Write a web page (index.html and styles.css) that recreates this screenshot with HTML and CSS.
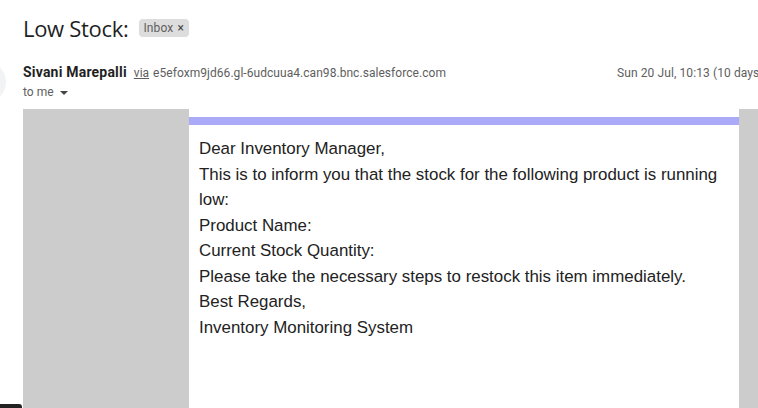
FILE: index.html
```html
<!DOCTYPE html>
<html>
<head>
<meta charset="utf-8">
<link rel="stylesheet" href="styles.css">
</head>
<body>
<div class="page">
  <div class="subject-row">
    <h1 class="subject">Low Stock:</h1>
    <span class="chip">Inbox <span class="chip-x">×</span></span>
  </div>
  <div class="sender-block">
    <div class="avatar"></div>
    <div class="sender-info">
      <div class="sender-row">
        <span class="sender-name">Sivani Marepalli</span>
        <span class="via">via</span>
        <span class="sender-addr">e5efoxm9jd66.gl-6udcuua4.can98.bnc.salesforce.com</span>
        <span class="date">Sun 20 Jul, 10:13 (10 days</span>
      </div>
      <div class="to-row">to me <svg class="caret" width="10" height="10" viewBox="0 0 10 10"><path d="M1 3h8L5 7z" fill="#444"/></svg></div>
    </div>
  </div>
  <div class="mail-frame">
    <div class="side-left"></div>
    <div class="content">
      <div class="content-inner">
        <p>Dear Inventory Manager,</p>
        <p>This is to inform you that the stock for the following product is running low:</p>
        <p>Product Name:</p>
        <p>Current Stock Quantity:</p>
        <p>Please take the necessary steps to restock this item immediately.</p>
        <p>Best Regards,</p>
        <p>Inventory Monitoring System</p>
      </div>
    </div>
    <div class="side-right"></div>
  </div>
  <div class="corner-tab"></div>
</div>
</body>
</html>
```

FILE: styles.css
```css
html, body {
  margin: 0;
  padding: 0;
  background: #fff;
  overflow: hidden;
  width: 758px;
  height: 408px;
}
.page {
  position: relative;
  width: 758px;
  height: 408px;
  overflow: hidden;
  font-family: Roboto, "Liberation Sans", Arial, sans-serif;
}
.subject-row {
  display: flex;
  align-items: center;
  padding: 14px 0 0 23px;
  height: 28px;
}
.subject {
  margin: 0;
  font-family: "Open Sans", Roboto, sans-serif;
  font-weight: 400;
  font-size: 22px;
  color: #1f1f1f;
  line-height: 28px;
  letter-spacing: -0.3px;
}
.chip {
  margin-left: 10px;
  background: #dddddd;
  border-radius: 4px;
  padding: 0 5px;
  height: 18px;
  line-height: 18px;
  font-size: 12px;
  color: #5e5e5e;
  font-family: Roboto, sans-serif;
  letter-spacing: 0.1px;
}
.chip-x {
  margin-left: 1px;
  color: #444;
}
.sender-block {
  display: flex;
  margin-top: 20px;
  height: 48px;
}
.avatar {
  position: absolute;
  left: -34px;
  top: 62px;
  width: 40px;
  height: 40px;
  border-radius: 50%;
  background: #f1f3f4;
}
.sender-info {
  padding-left: 23px;
  white-space: nowrap;
}
.sender-row {
  display: flex;
  align-items: baseline;
  height: 20px;
  line-height: 20px;
}
.sender-name {
  font-size: 14px;
  font-weight: 700;
  color: #1f1f1f;
  letter-spacing: 0.2px;
}
.via {
  font-size: 12px;
  color: #5e5e5e;
  text-decoration: underline;
  margin-left: 7px;
}
.sender-addr {
  font-size: 12px;
  color: #5e5e5e;
  margin-left: 4px;
  letter-spacing: 0.05px;
}
.date {
  font-size: 12px;
  color: #5e5e5e;
  margin-left: 171px;
  letter-spacing: 0.1px;
}
.to-row {
  font-size: 12px;
  color: #5e5e5e;
  line-height: 18px;
  margin-top: 1px;
  display: flex;
  align-items: center;
  gap: 5px;
}
.caret {
  margin-top: 1px;
}
.mail-frame {
  display: flex;
  margin-left: 23px;
  margin-top: -1px;
  height: 300px;
  background: #cccccc;
}
.side-left {
  width: 166px;
  flex: none;
}
.content {
  width: 550px;
  flex: none;
  background: #fff;
  padding-top: 8px;
}
.content-inner {
  border-top: 8px solid #aaaaf8;
  padding: 11px 10px 0 10px;
  font-family: "Liberation Sans", Arial, sans-serif;
  font-size: 16.9px;
  line-height: 25.5px;
  color: #222;
}
.content-inner p {
  margin: 0;
}
.side-right {
  flex: 1;
}
.corner-tab {
  position: absolute;
  left: 0;
  bottom: 0;
  width: 22px;
  height: 4px;
  background: #222;
  border-top-right-radius: 3px;
}
```
